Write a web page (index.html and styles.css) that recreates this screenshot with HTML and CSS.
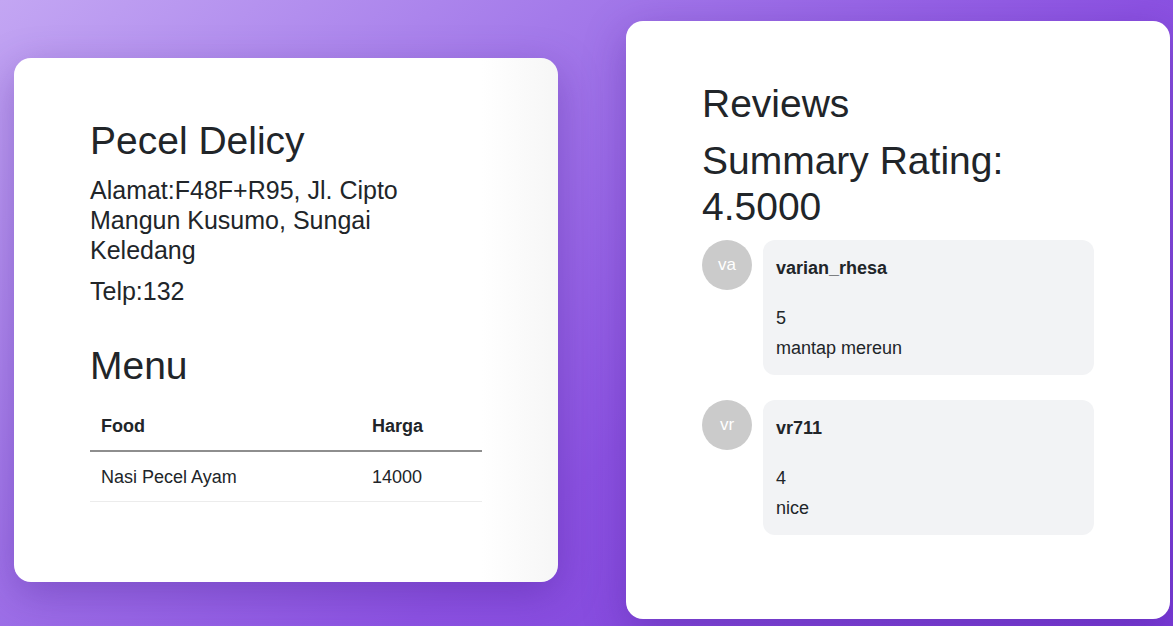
FILE: index.html
```html
<!DOCTYPE html>
<html lang="id">
<head>
<meta charset="utf-8">
<title>Pecel Delicy</title>
<link rel="stylesheet" href="styles.css">
</head>
<body>
<main class="page">
  <section class="card card-info">
    <h1 class="title">Pecel Delicy</h1>
    <p class="detail address">Alamat:F48F+R95, Jl. Cipto Mangun Kusumo, Sungai Keledang</p>
    <p class="detail">Telp:132</p>
    <h2 class="title menu-title">Menu</h2>
    <table class="menu">
      <thead>
        <tr><th class="col-food">Food</th><th class="col-price">Harga</th></tr>
      </thead>
      <tbody>
        <tr><td>Nasi Pecel Ayam</td><td class="col-price">14000</td></tr>
      </tbody>
    </table>
  </section>
  <section class="card card-reviews">
    <h2 class="title">Reviews</h2>
    <h2 class="title summary">Summary Rating: 4.5000</h2>
    <ul class="reviews">
      <li class="review">
        <div class="avatar">va</div>
        <div class="bubble">
          <div class="user">varian_rhesa</div>
          <div class="rating">5</div>
          <div class="comment">mantap mereun</div>
        </div>
      </li>
      <li class="review">
        <div class="avatar">vr</div>
        <div class="bubble">
          <div class="user">vr711</div>
          <div class="rating">4</div>
          <div class="comment">nice</div>
        </div>
      </li>
    </ul>
  </section>
</main>
</body>
</html>
```
FILE: styles.css
```css
* { box-sizing: border-box; }
html, body { margin: 0; padding: 0; }
body {
  font-family: "Liberation Sans", Arial, sans-serif;
  color: #212529;
  background: linear-gradient(140deg, #c3a6f3 0%, #a47aea 30%, #8c52e2 60%, #7a3bd8 100%);
  height: 626px;
  overflow: hidden;
}
.page {
  height: 626px;
  padding: 14px 4px 0 14px;
  display: grid;
  grid-template-columns: 544px 544px;
  column-gap: 68px;
  align-items: center;
}
.card {
  background: #fff;
  border-radius: 17px;
  padding: 60px 76px;
  box-shadow: 0 12px 40px rgba(70, 25, 140, 0.35);
}
.card-info {
  background: linear-gradient(90deg, #ffffff 0%, #ffffff 86%, #f6f6f6 100%);
}
.title {
  margin: 0 0 10px;
  font-size: 39px;
  line-height: 1.2;
  font-weight: 400;
}
.detail {
  margin: 0 0 11px;
  font-size: 25px;
  line-height: 30px;
}
.address { max-width: 360px; }
.menu-title { margin-top: 37px; margin-bottom: 12px; }
.menu {
  width: 100%;
  border-collapse: collapse;
  font-size: 18px;
  line-height: 27px;
  margin-bottom: 20px;
}
.menu th, .menu td {
  text-align: left;
  padding: 12px 11px 10px;
}
.menu .col-price { padding-left: 10px; }
.menu th {
  font-weight: 700;
  border-bottom: 2px solid #8e8e8e;
}
.menu td { border-bottom: 1px solid #ececec; }
.col-food { width: 272px; }
.summary { margin-bottom: 9px; }
.reviews {
  list-style: none;
  margin: 0;
  padding: 0;
}
.review {
  display: flex;
  align-items: flex-start;
  gap: 11px;
  margin-bottom: 25px;
}
.review:last-child { margin-bottom: 24px; }
.avatar {
  flex: none;
  width: 50px;
  height: 50px;
  border-radius: 50%;
  background: #cbcbcb;
  color: #fff;
  font-size: 17px;
  display: flex;
  align-items: center;
  justify-content: center;
}
.bubble {
  flex: 1;
  background: #f2f3f5;
  border-radius: 12px;
  padding: 13px 13px 12px;
  font-size: 18px;
  line-height: 30px;
}
.user { font-weight: 700; margin-bottom: 20px; }
```
